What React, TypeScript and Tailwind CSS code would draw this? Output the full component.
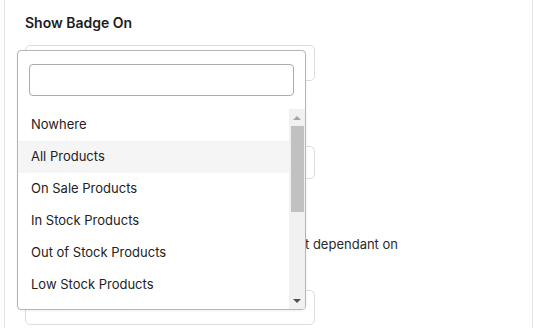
const options = [
    'Nowhere',
    'All Products',
    'On Sale Products',
    'In Stock Products',
    'Out of Stock Products',
    'Low Stock Products',
]

export default function App() {
    return (
        <div
            className="relative w-[536px] h-[328px] overflow-hidden bg-white text-[#1f1f1f]"
            style={{ fontFamily: 'Inter, "Liberation Sans", sans-serif' }}
        >
            {/* settings card, top edge scrolled out of view */}
            <div className="ml-[4px] mr-[3px] h-full border-x border-[#e5e5e5] pl-[20px] pt-[14px]">
                <h3 className="text-[14px] font-semibold leading-[18px] text-[#1d1d1d]">Show Badge On</h3>

                <div className="mt-[13px] h-[36px] w-[290px] rounded-[5px] border border-[#dcdcdc]" />

                <div className="mt-[65px] h-[33px] w-[290px] rounded-[5px] border border-[#dcdcdc]" />

                <p className="mt-[56px] flex text-[13px] leading-[18px] text-[#2a2a2a]">
                    <span className="w-[280px] overflow-hidden whitespace-nowrap text-right">Where the badge shows is no</span>
                    <span>t dependant on</span>
                </p>

                <div className="mt-[37px] h-[35px] w-[290px] rounded-[5px] border border-[#dcdcdc]" />
            </div>

            {/* open select dropdown */}
            <div className="absolute left-[17px] top-[50px] w-[289px] h-[260px] flex flex-col rounded-[4px] border border-[#b5b5b5] bg-white shadow-[0_1px_3px_rgba(0,0,0,0.06)]">
                <div className="px-[11px] pt-[13px]">
                    <input className="block w-full h-[32px] rounded-[4px] border border-[#ababab] outline-none px-2 text-[13px]" />
                </div>
                <div className="mt-[13px] flex flex-1 min-h-0">
                    <ul className="flex-1">
                        {options.map((o, i) => (
                            <li
                                key={o}
                                className={`h-[32px] flex items-center pl-[13px] text-[13px] text-[#222] ${i === 1 ? 'bg-[#f5f5f5]' : ''}`}
                            >
                                {o}
                            </li>
                        ))}
                    </ul>
                    <div className="w-[16px] flex flex-col items-center bg-[#f1f1f1] rounded-br-[3px]">
                        <div className="h-[17px] flex items-center justify-center">
                            <div className="w-0 h-0 border-x-[4px] border-x-transparent border-b-[4px] border-b-[#a3a3a3]" />
                        </div>
                        <div className="w-[13px] h-[86px] ml-[1px] bg-[#c1c1c1]" />
                        <div className="flex-1" />
                        <div className="h-[17px] flex items-center justify-center">
                            <div className="w-0 h-0 border-x-[4px] border-x-transparent border-t-[4px] border-t-[#505050]" />
                        </div>
                    </div>
                </div>
            </div>
        </div>
    )
}
